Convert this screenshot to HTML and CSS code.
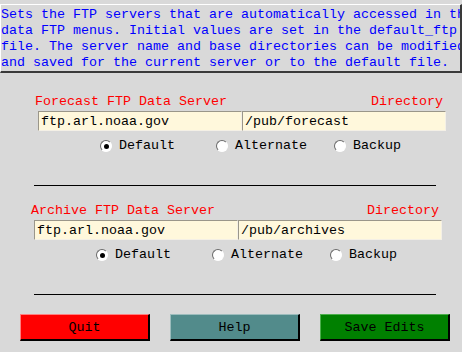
FILE: index.html
```html
<!DOCTYPE html>
<html lang="en">
  <head>
    <meta charset="UTF-8" />
    <title>FTP Servers</title>
    <link rel="stylesheet" href="styles.css">
  </head>
  <body>
    <div class="desc">Sets the FTP servers that are automatically accessed in the
data FTP menus. Initial values are set in the default_ftp
file. The server name and base directories can be modified
and saved for the current server or to the default file.</div>

    <div class="section first">
      <div class="labels">
        <span>Forecast FTP Data Server</span>
        <span>Directory</span>
      </div>
      <div class="entries">
        <input type="text" value="ftp.arl.noaa.gov" />
        <input type="text" value="/pub/forecast" />
      </div>
      <div class="radios">
        <label class="radio"><span class="dot on"></span>Default</label>
        <label class="radio"><span class="dot"></span>Alternate</label>
        <label class="radio"><span class="dot"></span>Backup</label>
      </div>
    </div>
    <div class="rule"></div>

    <div class="section second">
      <div class="labels">
        <span>Archive FTP Data Server</span>
        <span>Directory</span>
      </div>
      <div class="entries">
        <input type="text" value="ftp.arl.noaa.gov" />
        <input type="text" value="/pub/archives" />
      </div>
      <div class="radios">
        <label class="radio"><span class="dot on"></span>Default</label>
        <label class="radio"><span class="dot"></span>Alternate</label>
        <label class="radio"><span class="dot"></span>Backup</label>
      </div>
    </div>
    <div class="rule"></div>

    <div class="buttons">
      <button class="quit">Quit</button>
      <button class="help">Help</button>
      <button class="save">Save Edits</button>
    </div>
  </body>
</html>
```

FILE: styles.css
```css
body {
  margin: 0;
  padding-top: 4px;
  background-color: #d9d9d9;
  font-family: "Liberation Mono", "Courier New", monospace;
  font-size: 13.33px;
  line-height: 16px;
  width: 462px;
  height: 352px;
  overflow: hidden;
}

.desc {
  box-sizing: border-box;
  width: 462px;
  height: 69px;
  padding-top: 2px;
  color: #0000ff;
  white-space: pre;
  overflow: hidden;
  border-top: 1px solid #ffffff;
  border-left: 1px solid #ffffff;
  border-right: 2px solid #3a3a3a;
  border-bottom: 2px solid #3a3a3a;
}

.section {
  margin-top: 21px;
}

.section.first {
  padding-left: 35px;
}

.section.second {
  margin-top: 17px;
  padding-left: 31px;
}

.labels {
  display: flex;
  justify-content: space-between;
  width: 408px;
  color: #ff0000;
}

.entries {
  display: flex;
  margin-top: 1px;
  margin-left: 3px;
}

.entries input {
  box-sizing: border-box;
  width: 204px;
  height: 20px;
  margin: 0;
  padding: 0 2px;
  font-family: inherit;
  font-size: 13.33px;
  color: #000000;
  background-color: #fff8dc;
  border: 1px solid;
  border-color: #9a968a #f4f0e6 #f4f0e6 #9a968a;
  outline: none;
}

.radios {
  display: grid;
  grid-template-columns: 116px 118px auto;
  margin-top: 7px;
  margin-left: 65px;
}

.radio {
  display: flex;
  align-items: center;
  gap: 7px;
  color: #000000;
}

.dot {
  box-sizing: border-box;
  width: 12px;
  height: 12px;
  border-radius: 50%;
  background-color: #ffffff;
  border: 1px solid;
  border-color: #6a6a6a #ffffff #ffffff #6a6a6a;
  display: flex;
  align-items: center;
  justify-content: center;
}

.dot.on::after {
  content: "";
  width: 5px;
  height: 5px;
  border-radius: 50%;
  background-color: #000000;
}

.rule {
  width: 402px;
  height: 1px;
  margin: 31px 0 0 34px;
  background-color: #000000;
}

.buttons {
  display: flex;
  gap: 20px;
  margin-top: 19px;
  padding-left: 20px;
}

.buttons button {
  box-sizing: border-box;
  width: 130px;
  height: 27px;
  padding: 0;
  font-family: inherit;
  font-size: 13.33px;
  color: #000000;
  border-style: solid;
  border-width: 1px 2px 2px 1px;
  border-color: transparent #000000 #000000 transparent;
}

.quit {
  background-color: #ff0000;
  border-top-color: #ff8080 !important;
  border-left-color: #ff8080 !important;
}

.help {
  background-color: #528b8b;
  border-top-color: #9cbcbc !important;
  border-left-color: #9cbcbc !important;
}

.save {
  background-color: #008000;
  border-top-color: #4caf4c !important;
  border-left-color: #4caf4c !important;
}
```
